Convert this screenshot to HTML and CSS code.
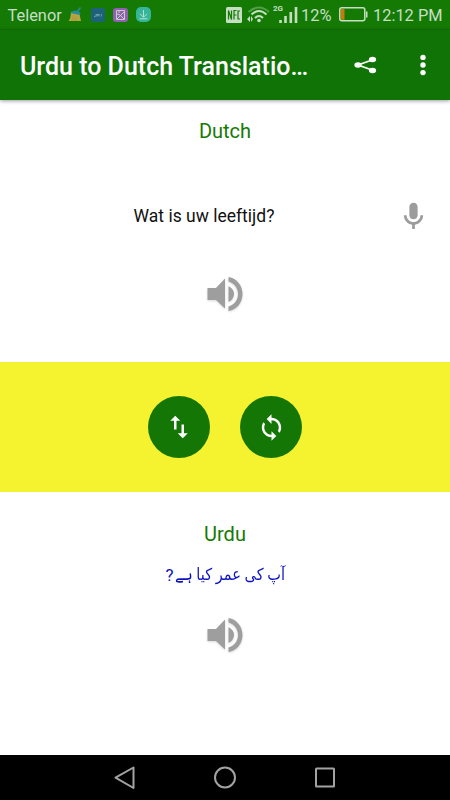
FILE: index.html
```html
<!DOCTYPE html>
<html lang="en">
<head>
<meta charset="utf-8">
<title>Urdu to Dutch Translation</title>
<link rel="stylesheet" href="styles.css">
</head>
<body>
<div class="screen">
  <div class="status">
    <span class="carrier">Telenor</span>
    <svg class="broom" width="14" height="15" viewBox="0 0 14 15"><path d="M3 5.500 11.500 7 13 14H.5c2-2 2-5 2.500-8.500z" fill="#b5a542"/><path d="M3 4.500 8 3.500l4.500 2-.5 2.500-9.500-2z" fill="#268aa0"/><path d="M9 5 12.500.5" stroke="#268aa0" stroke-width="1.500"/><path d="M4 13l2-4m1 5 1-4" stroke="#9a9530" stroke-width=".6"/></svg>
    <svg class="mini" width="14" height="14" viewBox="0 0 14 14"><rect width="14" height="14" rx="2" fill="#1d627a"/><path d="M3 8.500h1.500M5 6v2.500M6 8.500V6l1 1.500L8 6v2.500M10 6q1 1.200 0 2.500" stroke="#90b7bd" stroke-width=".7" fill="none"/></svg>
    <svg class="mini" width="15" height="14" viewBox="0 0 15 14"><rect width="15" height="14" rx="3" fill="#9160b0"/><path d="M3.500 2.500h8v9h-8zM4 11l7-7M4 6l3 1 4 4M5 4h2" stroke="#cbd9cc" stroke-width=".9" fill="none"/></svg>
    <svg class="mini" width="15" height="15" viewBox="0 0 15 15"><rect width="15" height="15" rx="5" fill="#35b59a"/><path d="M7.500 3v7M4 6.800l3.500 3.500L11 6.800M3.500 11.800h8" stroke="#b9ded0" fill="none"/></svg>
    <svg class="nfc" width="16" height="16" viewBox="0 0 16 16"><rect width="16" height="16" rx="1.500" fill="#c6dfc4"/><path d="M2.500 12.500v-9l3 9v-9M8 12.500v-9h2.500M8 8h2.500M14 4h-2v8h2" stroke="#147a04" stroke-width="1.200" fill="none"/></svg>
    <svg class="wifi" width="23" height="17" viewBox="0 0 23 17"><path d="M1.500 6Q12 -3 22 6" stroke="#52a047" stroke-width="2" fill="none"/><path d="M4.500 8.500Q12 1.500 19.500 8.500M8 12Q12 8 16 12" stroke="#c6dfc4" stroke-width="2" fill="none"/><circle cx="12" cy="14.500" r="1.800" fill="#c6dfc4"/><path d="M0 13l3-3v6zM6 13l-2-3v6z" fill="#c6dfc4"/></svg>
    <span class="network">2G</span>
    <svg class="signal" width="19" height="16" viewBox="0 0 19 16"><path d="M1.500 13v3M6.500 9v7M11.800 5v11M17 0v16" stroke="#c6dfc4" stroke-width="2.600"/></svg>
    <span class="percent">12%</span>
    <svg class="battery" width="29" height="15" viewBox="0 0 29 15"><rect x=".8" y=".8" width="25" height="13" rx="2" stroke="#c6dfc4" stroke-width="1.500" fill="none"/><path d="M27 4.500h1.500v6H27z" fill="#c6dfc4"/><path d="M2 2h3.500v10.800H2z" fill="#c77a06"/></svg>
    <span class="time">12:12 PM</span>
  </div>
  <header class="appbar">
    <h1 class="title">Urdu to Dutch Translatio…</h1>
    <svg class="share" width="24" height="18" viewBox="0 0 24 18"><path d="M19.500 3.500 4 9l15.500 5.500" stroke="#fff" stroke-width="1.700" fill="none"/><g fill="#fff"><ellipse cx="4" cy="9" rx="3.600" ry="2.700"/><ellipse cx="18.500" cy="3.500" rx="3.600" ry="2.700"/><ellipse cx="18.500" cy="14.500" rx="3.600" ry="2.700"/></g></svg>
    <svg class="more" width="6" height="22" viewBox="0 0 6 22" fill="#fff"><circle cx="3" cy="3.400" r="2.700"/><circle cx="3" cy="11" r="2.700"/><circle cx="3" cy="18.600" r="2.700"/></svg>
  </header>
  <main class="content">
    <section class="source">
      <h2 class="lang">Dutch</h2>
      <div class="entry">
        <p class="phrase">Wat is uw leeftijd?</p>
        <svg class="mic" width="33" height="33" viewBox="0 0 24 24" fill="#9c9c9c"><path d="M12 14c1.660 0 3-1.340 3-3V5c0-1.660-1.340-3-3-3S9 3.340 9 5v6c0 1.660 1.340 3 3 3z"/><path d="M17 11c0 2.760-2.240 5-5 5s-5-2.240-5-5H5c0 3.530 2.610 6.430 6 6.920V21h2v-3.080c3.390-.49 6-3.390 6-6.920h-2z"/></svg>
      </div>
      <svg class="speaker" width="36" height="36" viewBox="0 0 36 36" fill="#9e9e9e"><path d="M.5 12h8.500l9-9.500v30L9 24H.5zM21.500 10q5.500 3 5.500 8t-5.500 8zM21.500 1C30 2.500 35.500 9.500 35.500 18S30 33.500 21.500 35v-4.500C27 29 31 24 31 18S27 7 21.500 5.500z"/></svg>
    </section>
    <section class="actions">
      <div class="round"><svg width="30" height="30" viewBox="0 0 24 24" fill="#fff"><path d="M16 17.010V10h-2v7.010h-3L15 21l4-3.990h-3zM9 3 5 6.990h3V14h2V6.990h3L9 3z"/></svg></div>
      <div class="round"><svg width="29" height="29" viewBox="0 0 24 24" fill="#fff"><path d="M12 4V1L8 5l4 4V6c3.310 0 6 2.690 6 6 0 1.010-.25 1.970-.7 2.800l1.460 1.460C19.540 15.030 20 13.570 20 12c0-4.420-3.580-8-8-8zm0 14c-3.310 0-6-2.690-6-6 0-1.010.25-1.970.7-2.800L5.240 7.740C4.460 8.970 4 10.430 4 12c0 4.420 3.580 8 8 8v3l4-4-4-4v3z"/></svg></div>
    </section>
    <section class="target">
      <h2 class="lang">Urdu</h2>
      <p class="urdu" lang="ur"><bdo class="mark" dir="ltr">?</bdo><span class="words" dir="rtl">آپ کی عمر کیا ہے</span></p>
      <svg class="speaker" width="36" height="36" viewBox="0 0 36 36" fill="#9e9e9e"><path d="M.5 12h8.500l9-9.500v30L9 24H.5zM21.500 10q5.500 3 5.500 8t-5.500 8zM21.500 1C30 2.500 35.500 9.500 35.500 18S30 33.500 21.500 35v-4.500C27 29 31 24 31 18S27 7 21.500 5.500z"/></svg>
    </section>
  </main>
  <nav class="navbar">
    <svg width="24" height="24" viewBox="0 0 24 24"><path d="M20.500 1.500v20.500L2.500 11.700z"/></svg>
    <svg width="24" height="24" viewBox="0 0 24 24"><circle cx="12" cy="11.500" r="10"/></svg>
    <svg width="24" height="24" viewBox="0 0 24 24"><rect x="3" y="2.500" width="18" height="18" rx=".5"/></svg>
  </nav>
</div>
</body>
</html>
```

FILE: styles.css
```css
* { box-sizing: border-box; }
body { margin: 0; font-family: Roboto, "Noto Sans", sans-serif; }
h1, h2, p { margin: 0; font-weight: 400; }
svg { display: block; flex: none; }
.screen { width: 450px; height: 800px; display: flex; flex-direction: column; background: #fff; overflow: hidden; }
.status { height: 30px; flex: none; display: flex; align-items: center; background: #147a04; color: #c6dfc4; padding-left: 7.500px; font-size: 16.400px; line-height: 28px; white-space: nowrap; border-bottom: 1px solid #107306; }
.carrier { width: 60.500px; padding-top: 3px; }
.broom { margin-right: 9px; }
.mini { margin-right: 8px; }
.nfc { margin-left: 67px; }
.wifi { margin-left: 5px; }
.network { font-size: 8px; font-weight: 700; line-height: 10px; align-self: flex-start; margin: 4px 0 0 3px; width: 6px; }
.signal { margin-left: 0; }
.percent { width: 34px; margin-left: 3px; padding-top: 3px; }
.battery { margin-left: 4px; }
.time { margin-left: 5px; padding-top: 3px; }
.appbar { height: 70px; flex: none; display: flex; align-items: center; background: #107306; color: #fff; padding-left: 20px; box-shadow: 0 1px 4px rgba(0, 0, 0, .4); z-index: 1; }
.title { width: 334px; font-size: 25px; font-weight: 500; line-height: 34px; margin-top: 3px; white-space: nowrap; }
.more { margin-left: 41.500px; }
.content { flex: 1; display: flex; flex-direction: column; }
.source { height: 262px; display: flex; flex-direction: column; align-items: center; padding-top: 16px; }
.lang { font-size: 20px; line-height: 30px; color: #147a04; }
.entry { align-self: stretch; display: grid; grid-template-columns: 1fr auto 1fr; align-items: center; height: 40px; margin-top: 50px; }
.phrase { grid-column: 2; font-size: 17.500px; line-height: 30px; color: #111; margin-right: 42px; }
.mic { justify-self: end; margin-right: 20px; }
.speaker { filter: drop-shadow(0 1px 1px rgba(0, 0, 0, .15)); }
.source .speaker { margin-top: 40px; }
.actions { height: 130px; display: flex; align-items: center; justify-content: center; gap: 30px; background: #f5f230; }
.round { width: 62px; height: 62px; border-radius: 50%; background: #147604; display: flex; align-items: center; justify-content: center; }
.target { flex: 1; display: flex; flex-direction: column; align-items: center; padding-top: 27px; }
.urdu { display: flex; width: 119px; height: 30px; font-family: "DejaVu Sans", sans-serif; font-size: 16.500px; line-height: 30px; color: #0c14c0; margin-top: 11px; white-space: nowrap; }
.mark { font-family: Roboto, sans-serif; font-size: 17px; width: 9px; flex: none; }
.words { flex: none; word-spacing: -1px; transform: scaleX(.88); transform-origin: left center; }
.target .speaker { margin-top: 27px; }
.navbar { height: 45px; flex: none; background: #000; display: flex; align-items: center; justify-content: center; gap: 76px; }
.navbar svg { fill: none; stroke: #a3a3a3; stroke-width: 2; stroke-linejoin: round; }
```
